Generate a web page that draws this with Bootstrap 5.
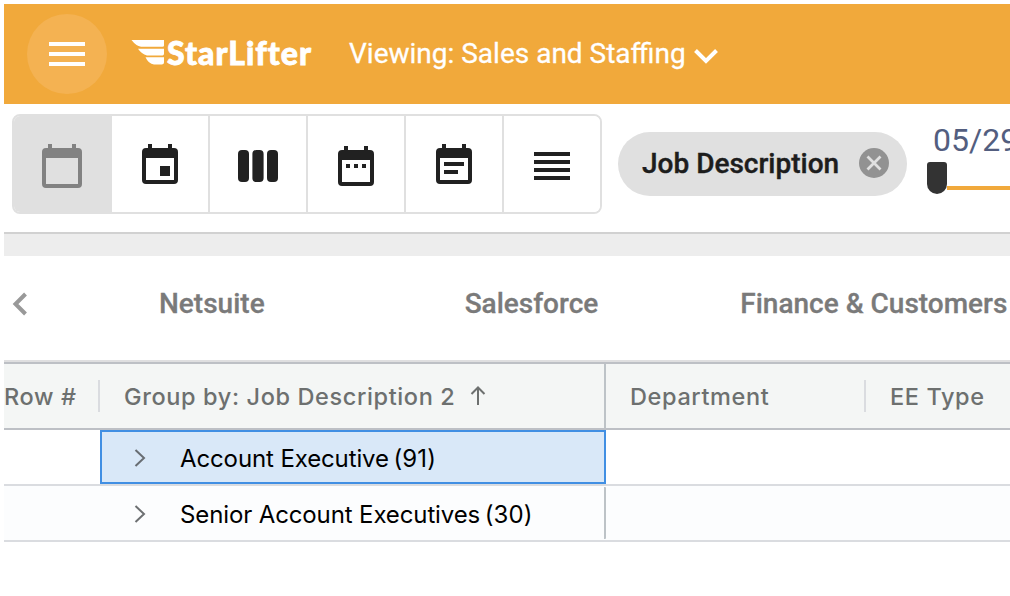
<!DOCTYPE html>
<html lang="en">
<head>
<meta charset="utf-8">
<meta name="viewport" content="width=device-width, initial-scale=1">
<title>StarLifter</title>
<link href="https://cdn.jsdelivr.net/npm/bootstrap@5.3.0/dist/css/bootstrap.min.css" rel="stylesheet">
<style>
body{font-family:Roboto,sans-serif;background:#fff;height:596px;padding:4px 0 0 4px}
svg{display:block;flex:none}
.topbar{height:100px;background:#f1a93b;color:#fff;padding-left:23px}
.menu-btn{width:80px;height:80px;background:#f4b252;border:0;padding:0}
.brand{margin-left:24px}
.brand-name{font-family:Lato,sans-serif;font-weight:900;font-size:32px;line-height:38px;letter-spacing:1px;width:147px;margin:0 0 2px 2px;-webkit-text-stroke:.8px #fff;white-space:nowrap}
.viewing{margin-left:35px;font-size:28px;line-height:34px;gap:8px;-webkit-text-stroke:.3px #fff}
.toolbar{height:130px;padding:10px 0 0 8px;border-bottom:2px solid #d1d1d1}
.views{width:590px;height:100px;border:2px solid #e0e0e0;border-radius:8px;overflow:hidden}
.views .view-btn{width:98px;padding:0;border:0;border-right:2px solid #e0e0e0;background:#fff;color:#212121}
.views .view-btn:last-child{border-right:0;width:96px}
.views .view-btn.active{background:#e0e0e0;color:#828282}
.chip{width:289px;height:64px;border-radius:32px;background:#e0e0e0;color:#1d1d1d;font-size:28px;font-weight:500;-webkit-text-stroke:.4px #1d1d1d;margin:18px 0 0 16px;padding:0 18.500px 1px 24px}
.chip svg{margin-top:-1px}
.period{margin:8px 0 0 20px;width:83px}
.date-text{font-size:32px;line-height:36px;height:40px;color:#535e7f;padding-left:6px;white-space:nowrap}
.handle{width:20px;height:32px;border-radius:3px 3px 10px 10px;background:#333}
.track{height:4px;background:#f1a93b;margin-top:8px}
.band{height:22px;background:#ededed}
.tabs{height:106px;border-bottom:2px solid #dfdfe0;color:#7a7a7a;font-size:28px;font-weight:500;-webkit-text-stroke:.3px #7a7a7a;line-height:34px;padding:0 0 9px 7px}
.tab-item{white-space:nowrap}
.tab-first{margin-left:132px}
.tab-second{margin-left:200px}
.tab-third{margin-left:142px}
.gridtable{font-family:Inter,sans-serif;font-size:24px}
.headrow{height:68px;border-top:2px solid #bdc0c5;border-bottom:2px solid #bdc0c5;background:#f4f6f5;color:#6d706f;font-weight:550;font-size:23.5px;letter-spacing:.62px;white-space:nowrap}
.headrow .label{padding-top:2px}
.sort{margin-left:15px}
.c1{width:96px}.c2{width:506px}.c3{width:260px}
.tick{width:2px;height:32px;background:#dadce0}
.pinned{border-right:2px solid #bdc3c7}
.datarow{height:56px;border-bottom:2px solid #dadce0;color:#000}
.datarow.alt{background:#fcfdfe}
.datarow .pinned{margin:1px 0;border-radius:0 1px 1px 0}
.picked{background:#d9e8f8;border:2px solid #418fe3}
.expander{margin-top:2px}
.name{padding-left:32px;white-space:nowrap;padding-top:3px;letter-spacing:-.12px}
.count{margin-left:-2px;letter-spacing:.1px}
</style>
</head>
<body class="overflow-hidden">
<header class="topbar d-flex align-items-center">
  <button class="menu-btn rounded-circle d-flex align-items-center justify-content-center" aria-label="Menu">
    <svg width="36" height="24" fill="#fff"><path d="M0 0h36v4H0zM0 10h36v4H0zM0 20h36v4H0z"/></svg>
  </button>
  <div class="brand d-flex align-items-center">
    <svg width="34" height="40" viewBox="0 0 34 40">
      <path fill="#fff" d="M.5 6H33V11.500Q33 12.700 31.500 12.700H10Q5 12 .5 6zM7 14.700H33V19.800Q33 21.500 31.500 21.500H16Q10.500 20 7 14.700zM14.500 23.300H33V28.500Q33 30.500 30.700 30.500H23Q17.500 30 14.500 23.300z"/>
    </svg>
    <span class="brand-name">StarLifter</span>
  </div>
  <div class="viewing d-flex align-items-center"><span>Viewing: Sales and Staffing</span>
    <svg width="24" height="16" class="mt-1" fill="none" stroke="#fff" stroke-width="4"><path d="M1.500 2.500 12 13 22.500 2.500"/></svg>
  </div>
</header>

<section class="toolbar d-flex align-items-start">
  <div class="views d-flex flex-shrink-0">
    <button class="view-btn active" aria-label="Calendar"><svg width="98" height="96" fill="currentColor" fill-rule="evenodd"><path d="M34 28h4v4h20v-4h4v4h2q4 0 4 4v32q0 4-4 4H32q-4 0-4-4V36q0-4 4-4h2zM32 42v26h32V42z"/></svg></button>
    <button class="view-btn" aria-label="Day"><svg width="96" height="96" fill="currentColor" fill-rule="evenodd"><path d="M36 28h4v4h16v-4h4v4h2q4 0 4 4v28q0 4-4 4H34q-4 0-4-4V36q0-4 4-4h2zM34 42v22h28V42zM48 50h10v10H48z"/></svg></button>
    <button class="view-btn" aria-label="Columns"><svg width="96" height="96" fill="currentColor"><rect x="28" y="34" width="11" height="32" rx="4"/><rect x="42.400" y="34" width="11.200" height="32" rx="4"/><rect x="57" y="34" width="11" height="32" rx="4"/></svg></button>
    <button class="view-btn" aria-label="Month"><svg width="96" height="96" fill="currentColor" fill-rule="evenodd"><path d="M36 30h4v4h16v-4h4v4h2q4 0 4 4v28q0 4-4 4H34q-4 0-4-4V38q0-4 4-4h2zM34 44v22h28V44zM38 48h4v4h-4zM46 48h4v4h-4zM54 48h4v4h-4z"/></svg></button>
    <button class="view-btn" aria-label="Notes"><svg width="96" height="96" fill="currentColor" fill-rule="evenodd"><path d="M36 28h4v4h16v-4h4v4h2q4 0 4 4v28q0 4-4 4H34q-4 0-4-4V36q0-4 4-4h2zM34 42v22h28V42zM38 46h20v4H38zM38 54h14v4H38z"/></svg></button>
    <button class="view-btn" aria-label="List"><svg width="96" height="96" fill="currentColor"><path d="M30 36h36v4H30zM30 44h36v4H30zM30 52h36v4H30zM30 60h36v4H30z"/></svg></button>
  </div>
  <div class="chip d-flex align-items-center justify-content-between flex-shrink-0"><span>Job Description</span>
    <svg width="30" height="30"><circle cx="15" cy="15" r="15" fill="#929292"/><path d="M8.500 8.500l13 13M21.500 8.500l-13 13" stroke="#e0e0e0" stroke-width="2.800"/></svg>
  </div>
  <div class="period flex-shrink-0">
    <div class="date-text">05/29</div>
    <div class="d-flex align-items-center"><div class="handle"></div><div class="track flex-grow-1 align-self-end mb-1"></div></div>
  </div>
</section>
<div class="band"></div>

<nav class="tabs d-flex align-items-center">
  <svg width="16" height="24" fill="none" stroke="#999" stroke-width="4"><path d="M14.500 2 4.500 12l10 10"/></svg>
  <span class="tab-item tab-first">Netsuite</span>
  <span class="tab-item tab-second">Salesforce</span>
  <span class="tab-item tab-third">Finance &amp; Customers</span>
</nav>

<main class="gridtable">
  <div class="headrow d-flex align-items-center">
    <div class="c1 d-flex align-items-center justify-content-between flex-shrink-0"><span class="label">Row #</span><span class="tick"></span></div>
    <div class="c2 h-100 pinned d-flex align-items-center flex-shrink-0 ps-4"><span class="label">Group by: Job Description 2</span>
      <svg class="sort" width="16" height="20" fill="none" stroke="#6d706f" stroke-width="2"><path d="M8 19V1.500M1.500 8 8 1.500 14.500 8"/></svg>
    </div>
    <div class="c3 d-flex align-items-center justify-content-between flex-shrink-0 ps-4"><span class="label">Department</span><span class="tick"></span></div>
    <div class="ps-4"><span class="label d-block">EE Type</span></div>
  </div>
  <div class="datarow d-flex">
    <div class="c1 flex-shrink-0"></div>
    <div class="c2 picked d-flex align-items-center">
      <svg class="expander" width="46" height="20" fill="none" stroke="#686d73" stroke-width="2"><path d="M33.500 2l8.500 8-8.500 8"/></svg>
      <span class="name">Account Executive <span class="count">(91)</span></span>
    </div>
  </div>
  <div class="datarow alt d-flex">
    <div class="c1 flex-shrink-0"></div>
    <div class="c2 pinned d-flex align-items-center">
      <svg class="expander" width="48" height="20" fill="none" stroke="#6d7072" stroke-width="2"><path d="M35.500 2l8.500 8-8.500 8"/></svg>
      <span class="name">Senior Account Executives <span class="count">(30)</span></span>
    </div>
  </div>
</main>
<script src="https://cdn.jsdelivr.net/npm/bootstrap@5.3.0/dist/js/bootstrap.bundle.min.js"></script>
</body>
</html>
